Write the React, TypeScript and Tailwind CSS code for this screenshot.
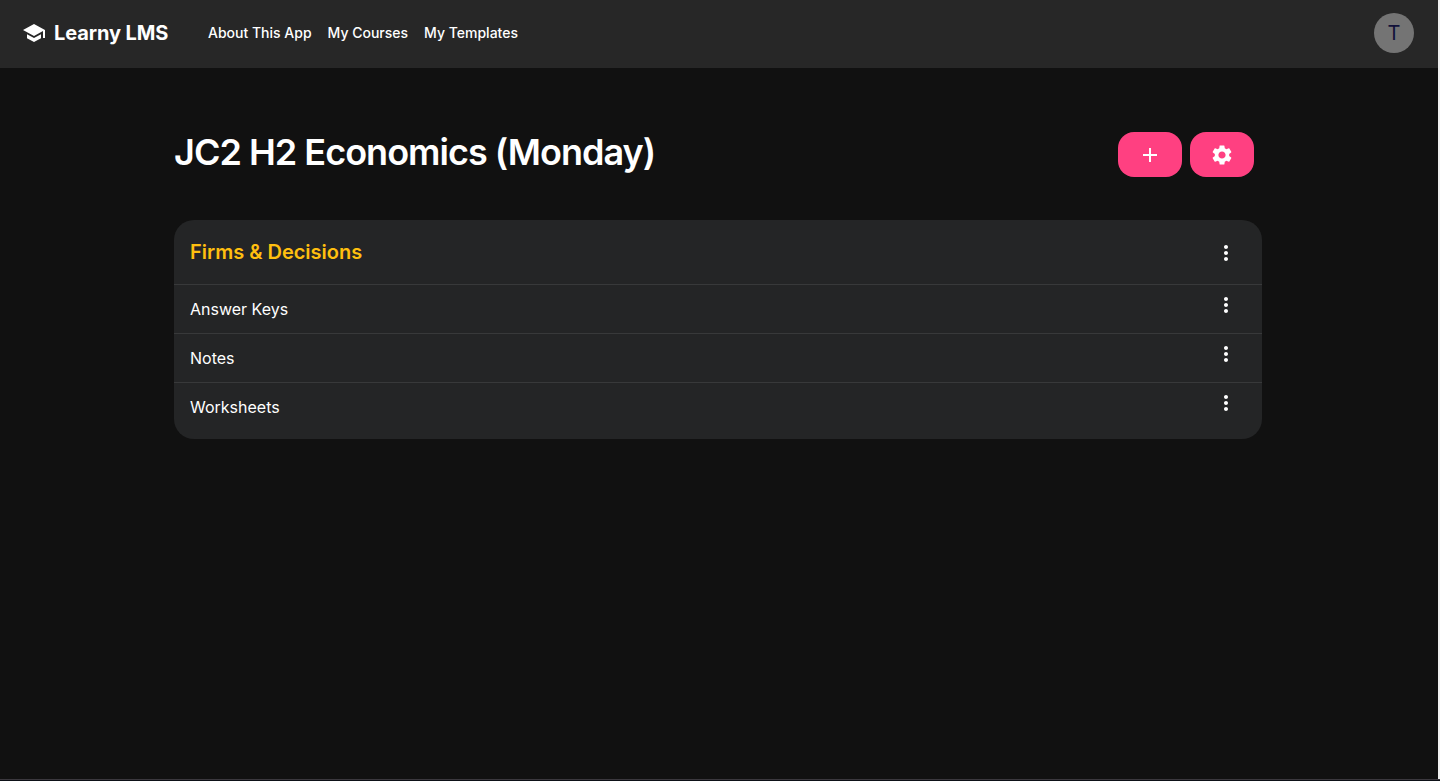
import { MdSchool, MdAdd, MdSettings, MdMoreVert } from "react-icons/md";

const sections = ["Answer Keys", "Notes", "Worksheets"];

function MenuButton() {
  return (
    <button className="flex size-6 items-center justify-center text-white" aria-label="More">
      <MdMoreVert size={24} />
    </button>
  );
}

export default function App() {
  return (
    <div className="flex h-[781px] flex-col bg-[#0d1117] font-['Inter',sans-serif] text-white">
      <div className="h-[779px] bg-[#f1f1f1] pr-[2px]">
        <div className="flex h-full flex-col bg-[#111111]">
          <header className="flex h-[68px] items-center bg-[#272727] pb-[2px] pl-[22px] pr-6">
            <MdSchool size={24} className="-mt-px" />
            <span className="ml-2 w-[114px] whitespace-nowrap text-xl font-bold tracking-[-0.1px]">Learny LMS</span>
            <nav className="ml-10 flex gap-4 text-sm font-medium">
              <a>About This App</a>
              <a>My Courses</a>
              <a>My Templates</a>
            </nav>
            <div className="ml-auto flex size-10 items-center justify-center rounded-full bg-[#747474] text-xl text-[#11113a]">T</div>
          </header>
          <main className="ml-[174px] w-[1088px] pt-16">
            <div className="flex h-[45px] items-center justify-between pr-2">
              <h1 className="pb-1.5 text-4xl font-semibold tracking-[-0.98px]">JC2 H2 Economics (Monday)</h1>
              <div className="flex gap-2">
                <button className="flex h-[45px] w-16 items-center justify-center rounded-2xl bg-[#ff4081]"><MdAdd size={24} /></button>
                <button className="flex h-[45px] w-16 items-center justify-center rounded-2xl bg-[#ff4081]"><MdSettings size={24} /></button>
              </div>
            </div>
            <section className="mt-[43px] h-[219px] overflow-hidden rounded-[20px] bg-[#242526]">
              <div className="flex h-16 items-center justify-between pl-4 pr-6">
                <h2 className="text-xl font-semibold text-[#ffbf0f]">Firms &amp; Decisions</h2>
                <div className="pt-0.5"><MenuButton /></div>
              </div>
              {sections.map((name) => (
                <div key={name} className="flex h-[49px] items-start justify-between border-t border-[#38393a] pl-4 pr-6">
                  <span className="pt-3 text-base">{name}</span>
                  <div className="pt-2"><MenuButton /></div>
                </div>
              ))}
            </section>
          </main>
        </div>
      </div>
      <div className="h-px bg-[#3b383e]" />
    </div>
  );
}
